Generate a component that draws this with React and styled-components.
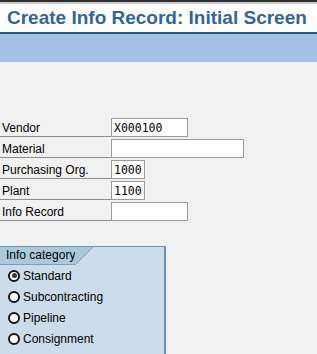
import React from "react";
import styled, { createGlobalStyle } from "styled-components";

const Global = createGlobalStyle`
  html, body { margin: 0; padding: 0; }
  body {
    background: #f1f1f1;
    font-family: "Liberation Sans", Arial, sans-serif;
    overflow: hidden;
  }
`;

const Page = styled.div`
  width: 317px;
  height: 354px;
  overflow: hidden;
  display: flex;
  flex-direction: column;
`;

const TopStrip = styled.div`
  height: 2px;
  background: #2e2e2e;
  border-bottom: 2px solid #c9c9c9;
`;

const TitleBar = styled.h1`
  margin: 0;
  height: 28px;
  line-height: 28px;
  padding-left: 7px;
  background: #ffffff;
  color: #326595;
  font-family: "Liberation Sans", Arial, sans-serif;
  font-weight: bold;
  font-size: 19px;
  white-space: nowrap;
  border-bottom: 2px solid #2b557d;
`;

const ToolBand = styled.div`
  height: 28px;
  background: #a4c0e4;
  border-bottom: 1px solid #e9eff8;
`;

const Form = styled.div`
  padding-top: 55px;
  display: flex;
  flex-direction: column;
  gap: 2px;
`;

const Row = styled.div`
  display: flex;
  align-items: flex-end;
  height: 19px;
`;

const Label = styled.label`
  box-sizing: border-box;
  width: 111px;
  height: 19px;
  padding: 3px 0 0 2px;
  line-height: 15px;
  font-size: 12px;
  color: #000;
  border-bottom: 1px solid #8e8e8e;
  white-space: nowrap;
`;

const Field = styled.input`
  box-sizing: border-box;
  width: ${(p) => p.$w}px;
  height: 19px;
  margin: 0;
  padding: 1px 0 0 2px;
  border: 1px solid #9a9a9a;
  border-radius: 0;
  background: #fff;
  font-family: "DejaVu Sans Mono", "Liberation Mono", monospace;
  font-size: 11.5px;
  color: #000;
  outline: none;
`;

const Group = styled.div`
  margin-top: 25px;
  width: 166px;
  box-sizing: border-box;
  flex: 1;
  background: #cddcea;
  border-top: 1px solid #6b8fb3;
  border-right: 2px solid #6b8fb3;
`;

const Tab = styled.div`
  display: flex;
  height: 18px;
`;

const TabText = styled.div`
  height: 17px;
  line-height: 17px;
  padding: 0 0 0 6px;
  width: 69px;
  background: #a9cad9;
  border-bottom: 1px solid #7f9fbc;
  font-size: 12px;
  color: #000;
  white-space: nowrap;
`;

const TabCorner = styled.div`
  width: 18px;
  height: 18px;
  background: linear-gradient(
    to bottom right,
    #a9cad9 calc(50% - 0.7px),
    #7f9fbc 50%,
    transparent calc(50% + 0.7px)
  );
`;

const Radios = styled.div`
  display: flex;
  flex-direction: column;
`;

const RadioRow = styled.div`
  display: flex;
  align-items: center;
  height: 21px;
  padding-left: 8px;
  gap: 3px;
  font-size: 12px;
  color: #000;
`;

const RadioDot = styled.span`
  box-sizing: border-box;
  width: 12px;
  height: 12px;
  border-radius: 50%;
  border: 2px solid #141414;
  background: #fff;
  display: flex;
  align-items: center;
  justify-content: center;
  &::after {
    content: "";
    width: 5px;
    height: 5px;
    border-radius: 50%;
    background: ${(p) => (p.$on ? "#333" : "transparent")};
  }
`;

const fields = [
  { label: "Vendor", value: "X000100", w: 77 },
  { label: "Material", value: "", w: 133 },
  { label: "Purchasing Org.", value: "1000", w: 34 },
  { label: "Plant", value: "1100", w: 34 },
  { label: "Info Record", value: "", w: 77 },
];

const cats = ["Standard", "Subcontracting", "Pipeline", "Consignment"];

export default function App() {
  return (
    <Page>
      <Global />
      <TopStrip />
      <TitleBar>Create Info Record: Initial Screen</TitleBar>
      <ToolBand />
      <Form>
        {fields.map((f) => (
          <Row key={f.label}>
            <Label>{f.label}</Label>
            <Field $w={f.w} defaultValue={f.value} readOnly />
          </Row>
        ))}
      </Form>
      <Group>
        <Tab>
          <TabText>Info category</TabText>
          <TabCorner />
        </Tab>
        <Radios>
          {cats.map((c, i) => (
            <RadioRow key={c}>
              <RadioDot $on={i === 0} />
              {c}
            </RadioRow>
          ))}
        </Radios>
      </Group>
    </Page>
  );
}
